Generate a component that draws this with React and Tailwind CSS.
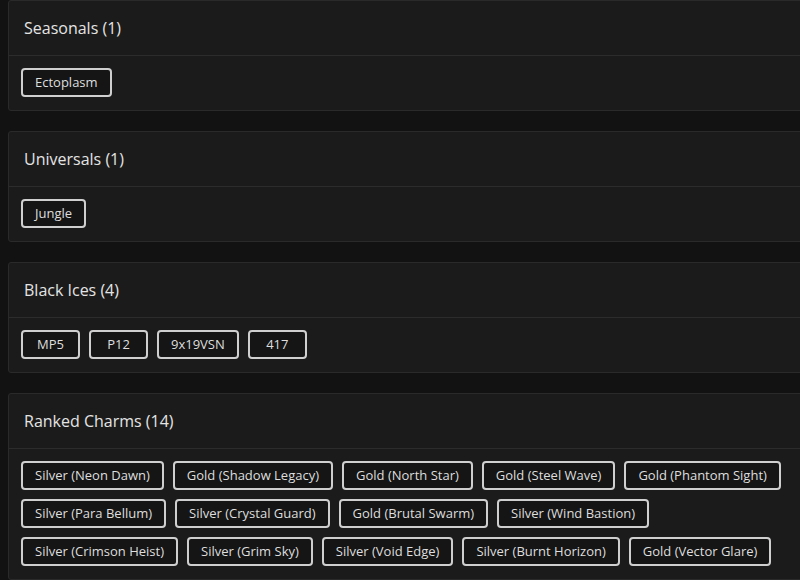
import React from 'react';

const sections = [
  { title: 'Seasonals', items: ['Ectoplasm'] },
  { title: 'Universals', items: ['Jungle'] },
  { title: 'Black Ices', items: ['MP5', 'P12', '9x19VSN', '417'] },
  {
    title: 'Ranked Charms',
    items: [
      'Silver (Neon Dawn)', 'Gold (Shadow Legacy)', 'Gold (North Star)', 'Gold (Steel Wave)',
      'Gold (Phantom Sight)', 'Silver (Para Bellum)', 'Silver (Crystal Guard)', 'Gold (Brutal Swarm)',
      'Silver (Wind Bastion)', 'Silver (Crimson Heist)', 'Silver (Grim Sky)', 'Silver (Void Edge)',
      'Silver (Burnt Horizon)', 'Gold (Vector Glare)'
    ]
  }
];

function Section({ title, items }) {
  return (
    <div className="w-[820px] shrink-0 bg-[#1b1b1b] border border-[#2a2a2a] rounded-[3px]">
      <div className="h-[55px] flex items-center px-[15px] border-b border-[#2c2c2c]">
        <h3 className="text-[16px] font-medium text-[#e4e4e4]">{title} ({items.length})</h3>
      </div>
      <div className="px-3 pt-3 pb-[13px] flex flex-wrap gap-[9px] max-w-[790px]">
        {items.map((item) => (
          <button
            key={item}
            type="button"
            className="h-[29px] px-[12px] min-w-[59px] border-2 border-[#cfcfcf] rounded-[4px] bg-[#151515] text-[13px] text-[#dedede]"
          >
            {item}
          </button>
        ))}
      </div>
    </div>
  );
}

export default function App() {
  return (
    <div className="w-[800px] h-[580px] overflow-hidden bg-[#121212] pl-2 flex flex-col gap-[20px]" style={{ fontFamily: '"Open Sans", "Noto Sans", sans-serif' }}>
      {sections.map((s) => (
        <Section key={s.title} {...s} />
      ))}
    </div>
  );
}
